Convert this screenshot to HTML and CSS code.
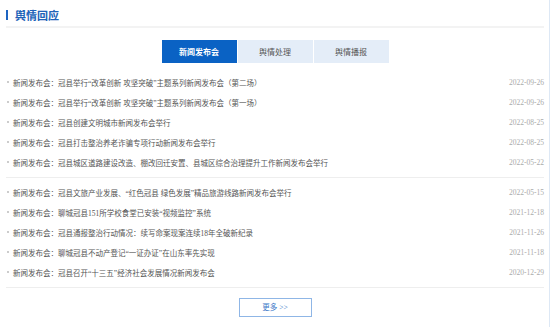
FILE: index.html
```html
<!DOCTYPE html>
<html lang="zh-CN">
<head>
  <meta charset="UTF-8">
  <title>舆情回应</title>
  <link rel="stylesheet" href="styles.css">
</head>
<body>
  <div class="panel">
    <div class="head">
      <span class="bar"></span>
      <h2>舆情回应</h2>
    </div>

    <div class="tabs">
      <span class="tab active">新闻发布会</span>
      <span class="tab">舆情处理</span>
      <span class="tab">舆情播报</span>
    </div>

    <ul class="news">
      <li><span class="title">新闻发布会：冠县举行“改革创新 攻坚突破”主题系列新闻发布会（第二场）</span><span class="date">2022-09-26</span></li>
      <li><span class="title">新闻发布会：冠县举行“改革创新 攻坚突破”主题系列新闻发布会（第一场）</span><span class="date">2022-09-26</span></li>
      <li><span class="title">新闻发布会：冠县创建文明城市新闻发布会举行</span><span class="date">2022-08-25</span></li>
      <li><span class="title">新闻发布会：冠县打击整治养老诈骗专项行动新闻发布会举行</span><span class="date">2022-08-25</span></li>
      <li><span class="title">新闻发布会：冠县城区道路建设改造、棚改回迁安置、县城区综合治理提升工作新闻发布会举行</span><span class="date">2022-05-22</span></li>
    </ul>

    <ul class="news">
      <li><span class="title">新闻发布会：冠县文旅产业发展、“红色冠县 绿色发展”精品旅游线路新闻发布会举行</span><span class="date">2022-05-15</span></li>
      <li><span class="title">新闻发布会：聊城冠县151所学校食堂已安装“视频监控”系统</span><span class="date">2021-12-18</span></li>
      <li><span class="title">新闻发布会：冠县通报整治行动情况：续写命案现案连续18年全破新纪录</span><span class="date">2021-11-26</span></li>
      <li><span class="title">新闻发布会：聊城冠县不动产登记“一证办证”在山东率先实现</span><span class="date">2021-11-18</span></li>
      <li><span class="title">新闻发布会：冠县召开“十三五”经济社会发展情况新闻发布会</span><span class="date">2020-12-29</span></li>
    </ul>

    <div class="more-wrap">
      <a class="more" href="#">更多 &gt;&gt;</a>
    </div>
  </div>
</body>
</html>
```

FILE: styles.css
```css
body {
  margin: 0;
  font-family: "Liberation Serif", "Noto Sans CJK SC", serif;
  color: #555;
  background: #fff;
}
.panel {
  width: 550px;
  height: 327px;
  box-sizing: border-box;
  padding: 0 5px 0 6px;
  border-right: 1px solid #dde8f5;
}
.head {
  display: flex;
  align-items: center;
  height: 18px;
  padding-top: 6px;
  padding-bottom: 2px;
  border-bottom: 2px solid #f3f3f3;
}
.bar {
  width: 2px;
  height: 10px;
  background: #1d64c2;
}
.head h2 {
  margin: 0 0 0 7px;
  font-family: "Noto Sans CJK SC", sans-serif;
  font-size: 11px;
  font-weight: bold;
  color: #2062b8;
  line-height: 18px;
}
.tabs {
  display: flex;
  justify-content: center;
  gap: 1px;
  margin-top: 12px;
}
.tab {
  width: 75px;
  height: 23px;
  line-height: 23px;
  text-align: center;
  font-family: "Noto Sans CJK SC", sans-serif;
  font-size: 8px;
  background: #e4edf8;
  color: #555;
}
.tab.active {
  background: #0a62c4;
  color: #fff;
  font-weight: bold;
}
.news {
  list-style: none;
  margin: 9px 0 0;
  padding: 0 0 5px;
  border-bottom: 1px solid #eeeeee;
}
.news + .news {
  margin-top: 0;
  padding-top: 4px;
}
.news li {
  display: flex;
  align-items: center;
  height: 20px;
  font-size: 7.5px;
}
.news li::before {
  content: "";
  width: 2px;
  height: 2px;
  margin: 0 4px 0 1px;
  background: #bbb;
  border-radius: 50%;
}
.title {
  white-space: nowrap;
}
.date {
  margin-left: auto;
  color: #aaa;
}
.more-wrap {
  display: flex;
  justify-content: center;
  margin-top: 10px;
}
.more {
  width: 73px;
  height: 19px;
  box-sizing: border-box;
  border: 1px solid #8fb6e6;
  line-height: 17px;
  text-align: center;
  font-size: 7.5px;
  color: #3b78c8;
  text-decoration: none;
}
```
